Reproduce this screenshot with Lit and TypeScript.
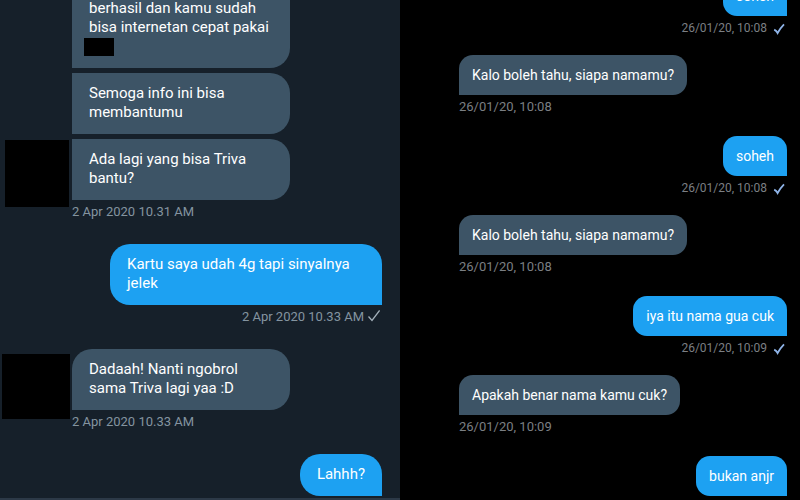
import { LitElement, html, css, nothing } from "lit";
import { customElement, property } from "lit/decorators.js";
import { classMap } from "lit/directives/class-map.js";

interface Message {
  text: string;
  own?: boolean;
  time?: string;
  avatar?: "small" | "large";
  continued?: boolean;
  redacted?: boolean;
  stacked?: boolean;
}

const TRIVA: Message[] = [
  { text: "berhasil dan kamu sudah bisa internetan cepat pakai", continued: true, redacted: true, stacked: true },
  { text: "Semoga info ini bisa membantumu", stacked: true },
  { text: "Ada lagi yang bisa Triva bantu?", time: "2 Apr 2020 10.31 AM", avatar: "small", stacked: true },
  { text: "Kartu saya udah 4g tapi sinyalnya jelek", own: true, time: "2 Apr 2020 10.33 AM" },
  { text: "Dadaah! Nanti ngobrol sama Triva lagi yaa :D", time: "2 Apr 2020 10.33 AM", avatar: "large" },
  { text: "Lahhh?", own: true },
];

const NAMES: Message[] = [
  { text: "soheh", own: true, time: "26/01/20, 10:08" },
  { text: "Kalo boleh tahu, siapa namamu?", time: "26/01/20, 10:08" },
  { text: "soheh", own: true, time: "26/01/20, 10:08" },
  { text: "Kalo boleh tahu, siapa namamu?", time: "26/01/20, 10:08" },
  { text: "iya itu nama gua cuk", own: true, time: "26/01/20, 10:09" },
  { text: "Apakah benar nama kamu cuk?", time: "26/01/20, 10:09" },
  { text: "bukan anjr", own: true },
];

@customElement("chat-thread")
export class ChatThread extends LitElement {
  @property({ attribute: false }) messages: Message[] = [];
  @property({ reflect: true }) variant: "dim" | "dark" = "dim";

  static styles = css`
    :host {
      display: flex;
      flex-direction: column;
      justify-content: flex-end;
      box-sizing: border-box;
      min-width: 0;
      height: 100%;
      overflow: hidden;
      font-family: Roboto, "Liberation Sans", sans-serif;
    }
    :host([variant="dim"]) {
      --gutter: 72px;
      --pad: 11px 17px 12px;
      --radius: 20px;
      --meta: #8494a0;
      --tick: #a3b0ba;
      --meta-height: 44px;
      --own-meta-height: 44px;
      --own-meta-size: 13px;
      --text-size: 15px;
      --line: 19px;
      --tick-gap: 4px;
      padding-right: 18px;
      padding-bottom: 2px;
      background: #16202a;
      border-bottom: 2px solid #2c3947;
    }
    :host([variant="dark"]) {
      --gutter: 59px;
      --pad: 10px 13px;
      --radius: 14px;
      --meta: #7b7f83;
      --tick: #8fb4e8;
      --meta-height: 41px;
      --own-meta-height: 39px;
      --own-meta-size: 12px;
      --text-size: 14px;
      --line: 20px;
      --tick-gap: 6px;
      padding-right: 13px;
      padding-bottom: 4px;
      background: #000;
    }
    .message {
      flex: none;
      display: grid;
      grid-template-columns: var(--gutter) minmax(0, 1fr);
      justify-items: start;
    }
    .own {
      justify-items: end;
    }
    .close {
      margin-bottom: 5px;
    }
    .avatar {
      grid-column: 1;
      grid-row: 1 / span 2;
      justify-self: end;
      background: #000;
    }
    .small {
      width: 64px;
      height: 67px;
      margin: 1px 3px 0 0;
    }
    .large {
      width: 68px;
      height: 65px;
      margin: 5px 2px 0 0;
    }
    .bubble {
      grid-column: 2;
      box-sizing: border-box;
      max-width: 218px;
      margin: 0;
      padding: var(--pad);
      border-radius: var(--radius) var(--radius) var(--radius) 0;
      background: #3d5466;
      color: #fff;
      font-size: var(--text-size);
      line-height: var(--line);
    }
    :host([variant="dark"]) .bubble {
      max-width: 272px;
    }
    .own .bubble {
      max-width: 272px;
      border-radius: var(--radius) var(--radius) 0 var(--radius);
      background: #1da1f2;
    }
    .stacked .bubble {
      border-radius: 0 var(--radius) var(--radius) 0;
    }
    .continued .bubble {
      padding-top: 32px;
    }
    .redaction {
      display: block;
      width: 30px;
      height: 18px;
      margin: 1px 0 0 -5px;
      background: #000;
    }
    .meta {
      grid-column: 2;
      display: flex;
      align-items: flex-start;
      box-sizing: border-box;
      height: var(--meta-height);
      padding-top: 2px;
      color: var(--meta);
      font-size: 13px;
      line-height: 20px;
    }
    .own .meta {
      gap: var(--tick-gap);
      height: var(--own-meta-height);
      padding-right: 2px;
      font-size: var(--own-meta-size);
    }
    .tick {
      width: 12px;
      height: 20px;
      fill: none;
      stroke: var(--tick);
      stroke-width: 1.3;
    }
    :host([variant="dark"]) .tick {
      stroke-width: 1.8;
    }
  `;

  private tick() {
    return this.variant === "dim"
      ? html`<svg class="tick" viewBox="0 0 12 20" role="img" aria-label="Terkirim">
          <path d="M0.5 9.5 L4 13.4 L11.6 3.4" />
        </svg>`
      : html`<svg class="tick" viewBox="0 0 12 20" role="img" aria-label="Terkirim">
          <path d="M1.2 11.6 Q3.4 12.6 4.6 15 Q7 10.5 11 6.4" />
        </svg>`;
  }

  render() {
    return this.messages.map((m, i) => {
      const classes = {
        message: true,
        own: !!m.own,
        close: !m.time && i < this.messages.length - 1,
        stacked: !!m.stacked,
        continued: !!m.continued,
      };
      return html`<div class=${classMap(classes)}>
        ${m.avatar ? html`<div class="avatar ${m.avatar}"></div>` : nothing}
        <p class="bubble">${m.text}${m.redacted ? html`<span class="redaction"></span>` : nothing}</p>
        ${m.time
          ? html`<div class="meta"><time>${m.time}</time>${m.own ? this.tick() : nothing}</div>`
          : nothing}
      </div>`;
    });
  }
}

@customElement("app-root")
export class AppRoot extends LitElement {
  static styles = css`
    :host {
      display: grid;
      grid-template-columns: repeat(2, minmax(0, 1fr));
      grid-template-rows: minmax(0, 1fr);
      height: 100vh;
      background: #000;
    }
  `;

  render() {
    return html`
      <chat-thread variant="dim" .messages=${TRIVA}></chat-thread>
      <chat-thread variant="dark" .messages=${NAMES}></chat-thread>
    `;
  }
}
